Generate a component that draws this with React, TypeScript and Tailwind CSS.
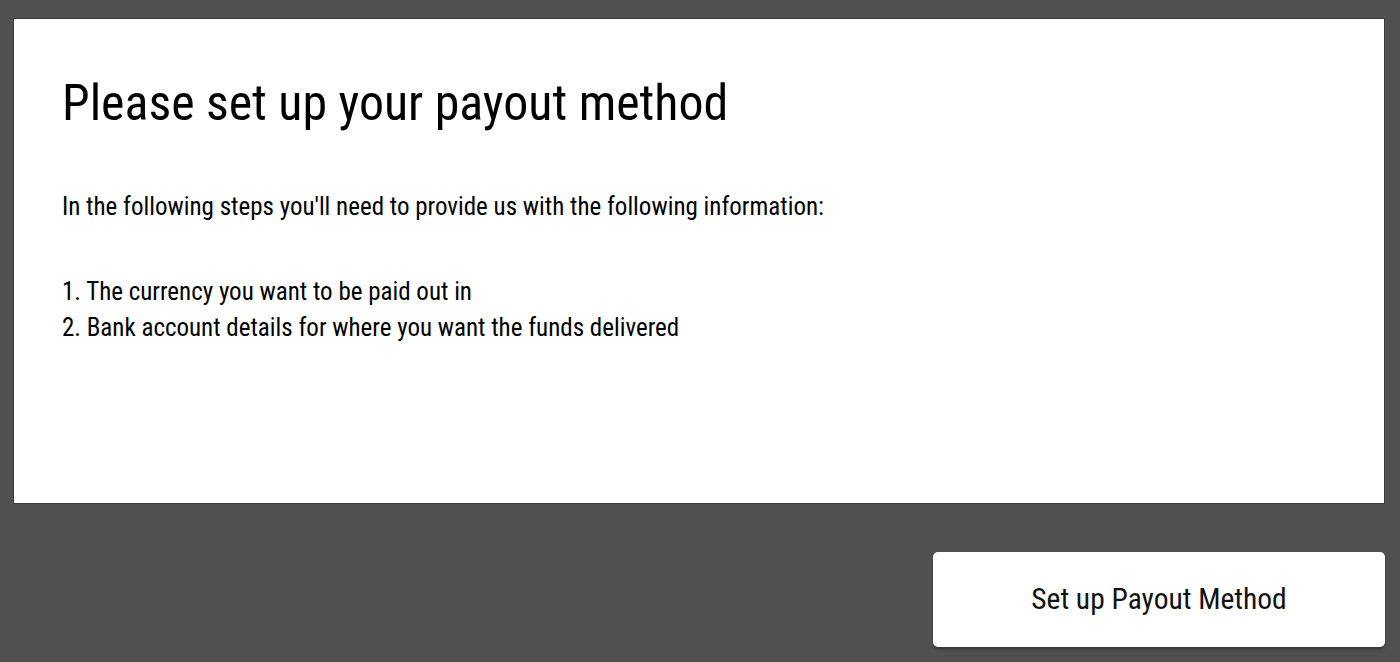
import React from 'react';

export default function App() {
  return (
    <div
      className="w-[1400px] h-[662px] bg-[#505050] pt-[18px] pl-[13px] pr-[15px] flex flex-col items-end"
      style={{ fontFamily: '"Roboto Condensed", Roboto, "Liberation Sans", sans-serif', fontStretch: 'condensed' }}
    >
      <div className="w-[1372px] h-[486px] bg-white border border-[#3c3c3c] pl-[48px] pt-[47px] text-black">
        <h1 className="text-[49.9px] leading-[74px]">Please set up your payout method</h1>
        <p className="mt-[49px] text-[25px] leading-[36px]">
          In the following steps you'll need to provide us with the following information:
        </p>
        <div className="mt-[49px] text-[25px] leading-[36px]">
          <p>1. The currency you want to be paid out in</p>
          <p>2. Bank account details for where you want the funds delivered</p>
        </div>
      </div>
      <button className="mt-[48px] w-[452px] h-[95px] bg-white rounded-[5px] shadow-[0_2px_3px_rgba(0,0,0,0.35)] text-[29.5px] text-[#111]">
        Set up Payout Method
      </button>
    </div>
  );
}
